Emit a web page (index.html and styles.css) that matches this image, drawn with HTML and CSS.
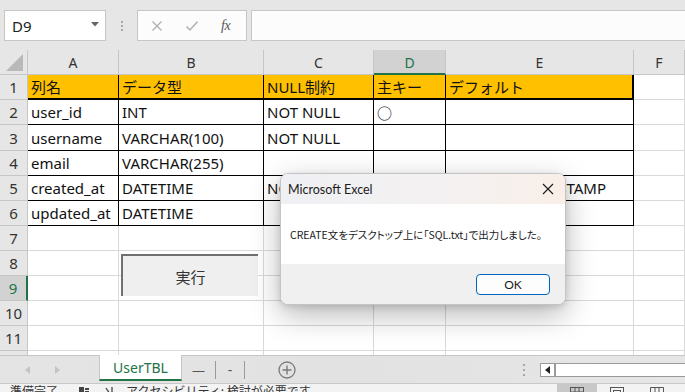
FILE: index.html
```html
<!DOCTYPE html>
<html lang="ja">
<head>
<meta charset="utf-8">
<link rel="stylesheet" href="styles.css">
</head>
<body>
<div class="app">
  <div class="fbar">
    <div class="namebox"><span>D9</span><svg class="caret" width="8" height="5" viewBox="0 0 8 5"><polygon points="0,0 8,0 4,4.5" fill="#666"/></svg></div>
    <div class="grip"><i></i><i></i><i></i></div>
    <div class="fbtns">
      <svg width="12" height="12" viewBox="0 0 12 12"><path d="M1.5 1.5L10.5 10.5M10.5 1.5L1.5 10.5" stroke="#b0b0b0" stroke-width="1.3" fill="none"/></svg>
      <svg width="14" height="12" viewBox="0 0 14 12"><path d="M1.5 6.5L5 10L12.5 1.5" stroke="#b0b0b0" stroke-width="1.5" fill="none"/></svg>
      <span class="fx">fx</span>
    </div>
    <div class="finput"></div>
  </div>

  <div class="sheet">
    <div class="grid">
      <div class="corner"><svg width="20" height="20" viewBox="0 0 20 20"><polygon points="18,2 18,19 1,19" fill="#b9b9b9"/></svg></div>
      <div class="h">A</div><div class="h">B</div><div class="h">C</div><div class="h sel">D</div><div class="h">E</div><div class="h">F</div>

      <div class="r">1</div><div class="c t o b2">列名</div><div class="c t o b2">データ型</div><div class="c t o b2">NULL制約</div><div class="c t o b2">主キー</div><div class="c t o b2 r2">デフォルト</div><div class="c"></div>
      <div class="r">2</div><div class="c t">user_id</div><div class="c t">INT</div><div class="c t">NOT NULL</div><div class="c t">○</div><div class="c t"></div><div class="c"></div>
      <div class="r">3</div><div class="c t">username</div><div class="c t">VARCHAR(100)</div><div class="c t">NOT NULL</div><div class="c t"></div><div class="c t"></div><div class="c"></div>
      <div class="r">4</div><div class="c t">email</div><div class="c t">VARCHAR(255)</div><div class="c t"></div><div class="c t"></div><div class="c t"></div><div class="c"></div>
      <div class="r">5</div><div class="c t">created_at</div><div class="c t">DATETIME</div><div class="c t">NOT NULL</div><div class="c t"></div><div class="c t">CURRENT_TIMESTAMP</div><div class="c"></div>
      <div class="r">6</div><div class="c t">updated_at</div><div class="c t">DATETIME</div><div class="c t"></div><div class="c t"></div><div class="c t"></div><div class="c"></div>
      <div class="r">7</div><div class="c"></div><div class="c"></div><div class="c"></div><div class="c"></div><div class="c"></div><div class="c"></div>
      <div class="r">8</div><div class="c"></div><div class="c"></div><div class="c"></div><div class="c"></div><div class="c"></div><div class="c"></div>
      <div class="r sel">9</div><div class="c"></div><div class="c"></div><div class="c"></div><div class="c"></div><div class="c"></div><div class="c"></div>
      <div class="r">10</div><div class="c"></div><div class="c"></div><div class="c"></div><div class="c"></div><div class="c"></div><div class="c"></div>
      <div class="r">11</div><div class="c"></div><div class="c"></div><div class="c"></div><div class="c"></div><div class="c"></div><div class="c"></div>
      <div class="r">12</div><div class="c"></div><div class="c"></div><div class="c"></div><div class="c"></div><div class="c"></div><div class="c"></div>
    </div>

    <div class="runbtn">実行</div>

    <div class="dlg">
      <div class="dlg-title">
        <span>Microsoft Excel</span>
        <svg width="12" height="12" viewBox="0 0 12 12"><path d="M1 1L11 11M11 1L1 11" stroke="#1a1a1a" stroke-width="1.1" fill="none"/></svg>
      </div>
      <div class="dlg-body">CREATE文をデスクトップ上に「SQL.txt」で出力しました。</div>
      <div class="dlg-foot"><div class="ok">OK</div></div>
    </div>
  </div>

  <div class="tabbar">
    <div class="nav">
      <svg width="6" height="8" viewBox="0 0 6 8"><polygon points="5,0 5,8 0,4" fill="#c4c4c4"/></svg>
      <svg width="6" height="8" viewBox="0 0 6 8"><polygon points="1,0 1,8 6,4" fill="#c4c4c4"/></svg>
    </div>
    <div class="tab active">UserTBL</div>
    <div class="tab plain dash">—</div>
    <div class="tsep"></div>
    <div class="tab plain hy">-</div>
    <div class="tsep"></div>
    <div class="add"><svg width="18" height="18" viewBox="0 0 18 18"><circle cx="9" cy="9" r="8" stroke="#7a7a7a" stroke-width="1.3" fill="none"/><path d="M9 4.5V13.5M4.5 9H13.5" stroke="#7a7a7a" stroke-width="1.4"/></svg></div>
    <div class="spacer"></div>
    <div class="vgrip"><i></i><i></i><i></i></div>
    <div class="hscroll">
      <div class="hs-btn"><svg width="5" height="8" viewBox="0 0 5 8"><polygon points="5,0 5,8 0,4" fill="#222"/></svg></div>
      <div class="hs-track"></div>
    </div>
  </div>

  <div class="status">
    <span class="st-text">準備完了</span>
    <svg class="st-icon" width="12" height="12" viewBox="0 0 12 12"><rect x="1" y="1" width="5" height="5" fill="#444"/><rect x="7" y="2" width="4" height="2" fill="#444"/><rect x="7" y="5" width="4" height="2" fill="#444"/></svg>
    <svg class="st-icon2" width="14" height="12" viewBox="0 0 14 12"><path d="M2 2L6 8M8 1v9" stroke="#444" stroke-width="1.3" fill="none"/></svg>
    <span class="st-text">アクセシビリティ: 検討が必要です</span>
    <div class="spacer"></div>
    <div class="views">
      <div class="view on"><svg width="14" height="10" viewBox="0 0 14 10"><rect x="0.5" y="0.5" width="13" height="9" fill="none" stroke="#555"/><path d="M5 0.5V9.5M9 0.5V9.5M0.5 5H13.5" stroke="#555"/></svg></div>
      <div class="view"><svg width="14" height="10" viewBox="0 0 14 10"><rect x="0.5" y="0.5" width="13" height="9" fill="none" stroke="#555"/><rect x="3.5" y="3.5" width="7" height="6" fill="none" stroke="#555"/></svg></div>
      <div class="view"><svg width="14" height="10" viewBox="0 0 14 10"><path d="M0.5 10V0.5H13.5V10M5 0.5V10M9 0.5V10" fill="none" stroke="#555"/></svg></div>
    </div>
  </div>
</div>
</body>
</html>
```

FILE: styles.css
```css
* { box-sizing: border-box; }
html, body { margin: 0; padding: 0; }
body {
  width: 685px;
  height: 392px;
  overflow: hidden;
  background: #e6e6e6;
  font-family: "Noto Sans", "Noto Sans CJK JP", sans-serif;
  color: #111;
}
.app { display: flex; flex-direction: column; width: 685px; }

/* formula bar */
.fbar {
  height: 50px;
  display: flex;
  align-items: flex-start;
  padding-top: 10px;
  padding-left: 4px;
}
.namebox {
  width: 102px;
  height: 31px;
  background: #fff;
  border: 1px solid #c6c6c6;
  display: flex;
  align-items: center;
  justify-content: space-between;
  padding: 0 6px 0 7px;
  font-size: 15px;
  color: #222;
}
.namebox span { margin-top: 1px; }
.caret { margin-top: -2px; }
.grip {
  width: 31px;
  height: 31px;
  display: flex;
  flex-direction: column;
  align-items: center;
  justify-content: center;
  gap: 2px;
}
.grip i, .vgrip i { display: block; width: 2px; height: 2px; background: #a8a8a8; }
.fbtns {
  width: 110px;
  height: 31px;
  background: #fcfcfc;
  border: 1px solid #c6c6c6;
  display: flex;
  align-items: center;
  padding-left: 13px;
  gap: 0;
}
.fbtns svg:first-child { margin-right: 22px; }
.fbtns svg:nth-child(2) { margin-right: 22px; }
.fx {
  font-family: "Liberation Serif", serif;
  font-style: italic;
  font-size: 14px;
  color: #555;
  letter-spacing: -0.5px;
}
.finput {
  flex: 1;
  margin-left: 4px;
  height: 31px;
  background: #fcfcfc;
  border-top: 1px solid #c6c6c6;
  border-bottom: 1px solid #c6c6c6;
  border-left: 1px solid #c6c6c6;
}

/* sheet */
.sheet { position: relative; height: 305px; background: #fff; overflow: hidden; }
.grid {
  display: grid;
  grid-template-columns: 28px 91px 145px 110px 72px 188px 1fr;
  grid-template-rows: 25px 25px 25px 26px repeat(8, 25px) 1fr;
  height: 100%;
}
.corner {
  background: #e6e6e6;
  border-right: 1px solid #c6c6c6;
  border-bottom: 1px solid #c6c6c6;
  display: flex;
  align-items: flex-end;
  justify-content: flex-end;
  padding: 0 2px 2px 0;
}
.h {
  background: #e6e6e6;
  border-right: 1px solid #c6c6c6;
  border-bottom: 1px solid #c6c6c6;
  display: flex;
  align-items: center;
  justify-content: center;
  font-size: 14px;
  color: #333;
  padding-top: 1px;
}
.h.sel {
  background: #d2d2d2;
  color: #217346;
  border-bottom: 2px solid #217346;
}
.r {
  background: #e6e6e6;
  border-right: 1px solid #c6c6c6;
  border-bottom: 1px solid #c6c6c6;
  display: flex;
  align-items: center;
  justify-content: center;
  font-size: 15px;
  color: #333;
}
.r.sel {
  background: #d2d2d2;
  color: #217346;
  border-right: 2px solid #217346;
}
.c {
  background: #fff;
  border-right: 1px solid #d9d9d9;
  border-bottom: 1px solid #d9d9d9;
  display: flex;
  align-items: center;
  padding-left: 3px;
  font-size: 15px;
  white-space: nowrap;
  overflow: visible;
  color: #111;
}
.c.t { border-right-color: #000; border-bottom-color: #000; }
.c.o { background: #ffc000; }
.c.b2 { border-bottom-width: 2px; }
.c.r2 { border-right-width: 2px; }

.runbtn {
  position: absolute;
  left: 121px;
  top: 204px;
  width: 137px;
  height: 42px;
  background: #efefef;
  border-top: 2px solid #707070;
  border-left: 2px solid #707070;
  display: flex;
  align-items: center;
  justify-content: center;
  font-family: "Noto Sans CJK JP", sans-serif;
  font-size: 15px;
  color: #333;
}

/* dialog */
.dlg {
  position: absolute;
  left: 280px;
  top: 123px;
  width: 286px;
  height: 132px;
  border-radius: 8px;
  border: 1px solid #c4c4c4;
  overflow: hidden;
  background: #fff;
  box-shadow: 0 10px 30px rgba(0,0,0,0.28), 0 2px 6px rgba(0,0,0,0.12);
  display: flex;
  flex-direction: column;
}
.dlg-title {
  height: 30px;
  flex: none;
  background: linear-gradient(90deg, #eff0f4 0%, #f4f1f1 60%, #f9efe8 100%);
  display: flex;
  align-items: center;
  justify-content: space-between;
  padding: 0 11px 0 7px;
  font-family: "Lato", "Noto Sans", sans-serif;
  font-size: 12.5px;
  color: #1a1a1a;
}
.dlg-body {
  height: 60px;
  flex: none;
  background: #fff;
  display: flex;
  align-items: center;
  padding-left: 9px;
  font-family: "Noto Sans CJK JP", sans-serif;
  font-feature-settings: "palt";
  font-size: 10.5px;
  color: #1a1a1a;
  white-space: nowrap;
}
.dlg-foot {
  flex: 1;
  background: #f0f0f0;
  display: flex;
  justify-content: flex-end;
  align-items: flex-start;
  padding: 10px 15px 0 0;
}
.ok {
  width: 74px;
  height: 21px;
  border: 1px solid #0067c0;
  border-radius: 4px;
  background: #fdfdfd;
  display: flex;
  align-items: center;
  justify-content: center;
  font-family: "Lato", "Noto Sans", sans-serif;
  font-size: 12px;
  color: #1a1a1a;
}

/* tab bar */
.tabbar {
  height: 29px;
  background: linear-gradient(90deg, #e4e4e4 0%, #e2e2e2 50%, #e6e6e6 100%);
  border-top: 1px solid #c6c6c6;
  border-bottom: 1px solid #c8c8c8;
  display: flex;
  align-items: center;
}
.nav {
  width: 99px;
  display: flex;
  align-items: center;
  padding-left: 25px;
  gap: 23px;
  height: 100%;
}
.tab {
  height: 100%;
  display: flex;
  align-items: center;
  justify-content: center;
  font-size: 14px;
  color: #444;
}
.tab.active {
  width: 83px;
  background: #fff;
  color: #217346;
  border-left: 1px solid #c6c6c6;
  border-right: 1px solid #c6c6c6;
  border-bottom: 2px solid #217346;
  margin-top: -1px;
  height: 26px;
  align-self: flex-start;
}
.tab.dash { width: 33px; font-size: 13px; color: #555; }
.tab.hy { width: 28px; color: #555; }
.tsep { width: 1px; height: 18px; background: #9a9a9a; }
.add { width: 84px; display: flex; justify-content: center; align-items: center; padding-top: 1px; }
.spacer { flex: 1; }
.vgrip { display: flex; flex-direction: column; gap: 3px; margin-right: 15px; }
.hscroll {
  width: 145px;
  height: 14px;
  display: flex;
  border: 1px solid #9a9a9a;
  border-right: none;
  background: #fff;
}
.hs-btn {
  width: 15px;
  display: flex;
  align-items: center;
  justify-content: center;
  border-right: 2px solid #9a9a9a;
}
.hs-track { flex: 1; background: #fff; }

/* status */
.status {
  height: 22px;
  background: #f3f3f3;
  display: flex;
  align-items: flex-start;
  padding-left: 10px;
  font-family: "Noto Sans CJK JP", sans-serif;
  font-size: 12px;
  color: #333;
}
.st-text { line-height: 14px; margin-top: 0; }
.st-icon { margin: 2px 0 0 20px; }
.st-icon2 { margin: 2px 8px 0 14px; }
.views { display: flex; height: 100%; margin-right: 8px; }
.view { width: 40px; height: 100%; display: flex; justify-content: center; padding-top: 3px; }
.view.on { background: #c8c8c8; }
```
